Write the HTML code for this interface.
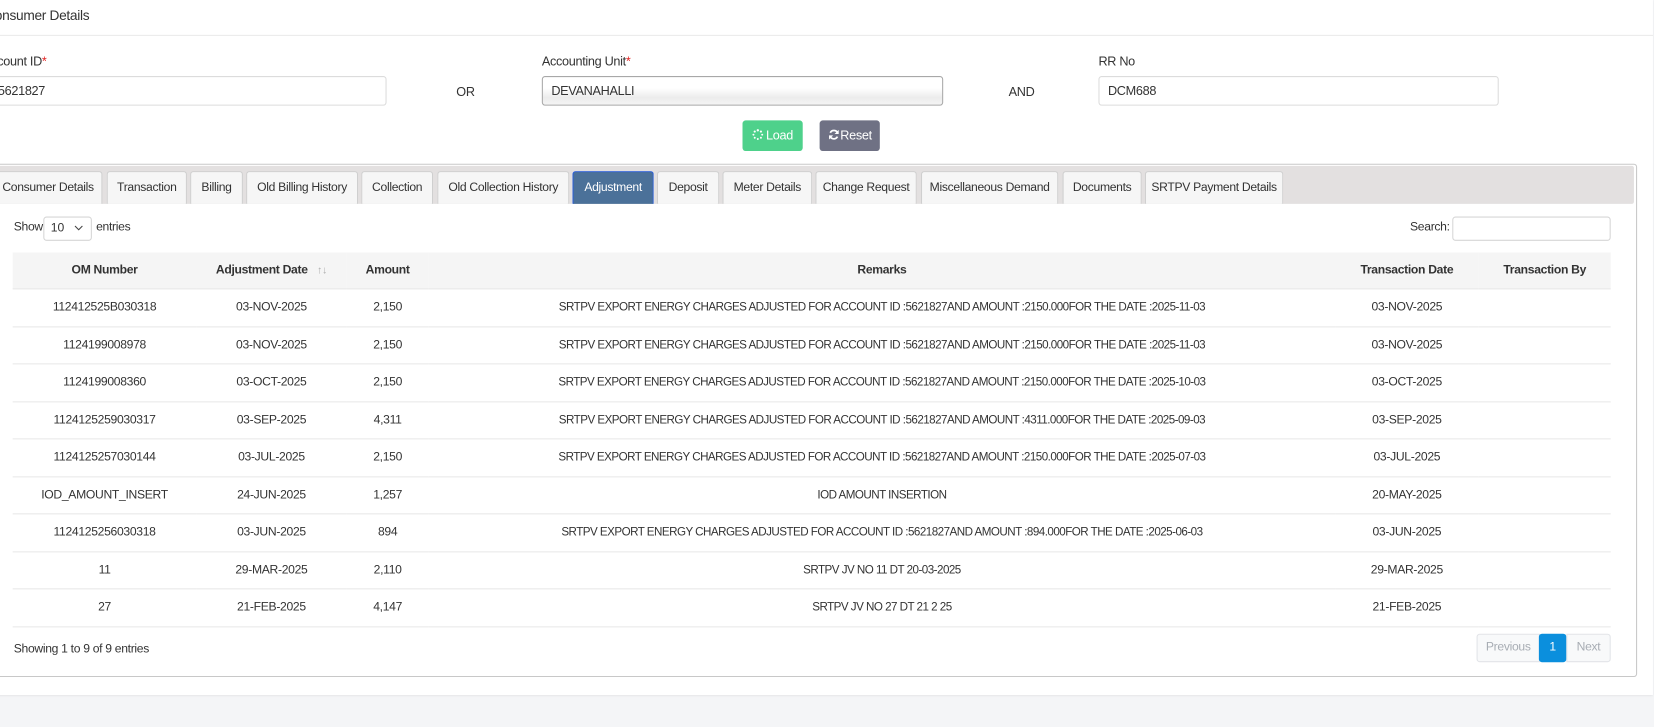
<!DOCTYPE html>
<html><head><meta charset="utf-8"><style>
html,body{margin:0;padding:0;width:1654px;height:726px;overflow:hidden;background:#f4f5f7;font-family:"Liberation Sans",sans-serif;color:#333}
#w{position:absolute;left:0;top:0;width:1566px;height:688px;transform:scale(1.0562);transform-origin:0 0}
.a{position:absolute;white-space:nowrap}
#card{position:absolute;left:-10px;top:0;width:1575px;height:658px;background:#fff;box-shadow:0 1px 2px rgba(0,0,0,.08)}
.f{font-size:12px;letter-spacing:-.3px}
.inp{position:absolute;height:28px;border:1px solid #dcdcdc;border-radius:3px;background:#fff;box-sizing:border-box;font-size:12px;letter-spacing:-.3px;line-height:27px;padding-left:8px}
.req{color:#e02020}
.btn{position:absolute;top:114px;height:29px;border-radius:3px;color:#fff;font-size:12px;letter-spacing:-.3px;line-height:29px;text-align:center}
#panel{position:absolute;left:-10px;top:155px;width:1560px;height:486px;border:1px solid #c8c8c8;border-radius:3px;box-sizing:border-box;background:#fff}
#bar{position:absolute;left:-10px;top:157px;width:1557px;height:36px;background:#e3e0e0;border-radius:2px}
.tab{position:absolute;top:162px;height:31px;box-sizing:border-box;border:1px solid #cfcfcf;border-bottom:none;background:#f6f6f6;border-radius:3px 3px 0 0;font-size:11.5px;letter-spacing:-.3px;line-height:31px;text-align:center;color:#333}
.tab.act{background:#4b7199;border:1px solid #2b5fd9;border-bottom:none;color:#fff}
table{position:absolute;left:12px;top:239px;width:1513px;border-collapse:collapse;table-layout:fixed;font-size:11.5px;letter-spacing:-.3px}
th{height:34px;background:#f5f5f5;font-weight:bold;text-align:center;border-bottom:1px solid #e8e8e8;padding:0}
td{height:34.5px;text-align:center;border-bottom:1px solid #e8e8e8;padding:0}
td:nth-child(4){font-size:11px;letter-spacing:-.5px}
.pg{position:absolute;top:600px;height:27px;box-sizing:border-box;font-size:11.5px;letter-spacing:-.3px;line-height:25px;text-align:center}
</style></head><body><div id="w">
<div id="card"></div>
<div class="a" style="left:-14px;top:7px;font-size:13px;letter-spacing:-.3px">Consumer Details</div>
<div class="a" style="left:0;top:33px;width:1565px;height:1px;background:#eaeaea"></div>

<div class="a f" style="left:-16px;top:51px">Account ID<span class="req">*</span></div>
<div class="a f" style="left:513px;top:51px">Accounting Unit<span class="req">*</span></div>
<div class="a f" style="left:1040px;top:51px">RR No</div>

<div class="inp" style="left:-20px;top:72px;width:386px;padding-left:17px">5621827</div>
<div class="a f" style="left:432px;top:80px">OR</div>
<div class="inp" style="left:513px;top:72px;width:380px;border-color:#a8a8a8;background:linear-gradient(#fff 0%,#fff 40%,#ececec 75%,#f4f4f4 100%)">DEVANAHALLI</div>
<div class="a f" style="left:955px;top:80px">AND</div>
<div class="inp" style="left:1040px;top:72px;width:379px">DCM688</div>

<div class="btn" style="left:703px;width:57px;background:#4ed18b">
<svg width="11" height="11" viewBox="0 0 12 12" style="vertical-align:-1px;margin-right:2px"><g fill="#fff"><circle cx="6" cy="1.5" r="1.2"/><circle cx="9.2" cy="2.8" r="1.1"/><circle cx="10.5" cy="6" r="1"/><circle cx="9.2" cy="9.2" r="1"/><circle cx="6" cy="10.5" r="1"/><circle cx="2.8" cy="9.2" r="1"/><circle cx="1.5" cy="6" r="1"/><circle cx="2.8" cy="2.8" r="1.1"/></g></svg>Load</div>
<div class="btn" style="left:776px;width:57px;background:#6f7184">
<svg width="11" height="11" viewBox="0 0 12 12" style="vertical-align:-1px;margin-right:1px"><path d="M10 4.5A4.2 4.2 0 0 0 2.3 4M2 7.5a4.2 4.2 0 0 0 7.7.5" stroke="#fff" stroke-width="1.8" fill="none"/><path d="M11 1v4.3H6.7zM1 11V6.7h4.3z" fill="#fff"/></svg>Reset</div>

<div id="panel"></div>
<div id="bar"></div>
<div class="tab" style="left:-6px;width:103px">Consumer Details</div>
<div class="tab" style="left:101px;width:76px">Transaction</div>
<div class="tab" style="left:180px;width:50px">Billing</div>
<div class="tab" style="left:233px;width:106px">Old Billing History</div>
<div class="tab" style="left:342px;width:68px">Collection</div>
<div class="tab" style="left:414px;width:125px">Old Collection History</div>
<div class="tab act" style="left:542px;width:77px">Adjustment</div>
<div class="tab" style="left:622px;width:59px">Deposit</div>
<div class="tab" style="left:684px;width:85px">Meter Details</div>
<div class="tab" style="left:772px;width:96px">Change Request</div>
<div class="tab" style="left:872px;width:130px">Miscellaneous Demand</div>
<div class="tab" style="left:1006px;width:75px">Documents</div>
<div class="tab" style="left:1084px;width:131px">SRTPV Payment Details</div>

<div class="a f" style="left:13px;top:209px;font-size:11.5px">Show</div>
<div class="a" style="left:41px;top:205px;width:46px;height:23px;border:1px solid #d6d6d6;border-radius:3px;box-sizing:border-box;font-size:11.5px;line-height:21px;padding-left:6px">10 <svg width="9" height="6" viewBox="0 0 9 6" style="margin-left:6px"><path d="M1 1l3.5 3.5L8 1" stroke="#444" fill="none"/></svg></div>
<div class="a f" style="left:91px;top:209px;font-size:11.5px">entries</div>
<div class="a f" style="left:1335px;top:209px;font-size:11.5px">Search:</div>
<div class="a" style="left:1375px;top:205px;width:150px;height:23px;border:1px solid #d6d6d6;border-radius:3px;box-sizing:border-box"></div>

<table>
<colgroup><col style="width:174px"><col style="width:142px"><col style="width:78px"><col style="width:858px"><col style="width:136px"><col style="width:125px"></colgroup>
<tr><th>OM Number</th><th>Adjustment Date <span style="color:#aaa;font-weight:normal;font-size:10px;margin-left:6px">↑↓</span></th><th>Amount</th><th>Remarks</th><th>Transaction Date</th><th>Transaction By</th></tr>
<tr><td>112412525B030318</td><td>03-NOV-2025</td><td>2,150</td><td>SRTPV EXPORT ENERGY CHARGES ADJUSTED FOR ACCOUNT ID :5621827AND AMOUNT :2150.000FOR THE DATE :2025-11-03</td><td>03-NOV-2025</td><td></td></tr>
<tr><td>1124199008978</td><td>03-NOV-2025</td><td>2,150</td><td>SRTPV EXPORT ENERGY CHARGES ADJUSTED FOR ACCOUNT ID :5621827AND AMOUNT :2150.000FOR THE DATE :2025-11-03</td><td>03-NOV-2025</td><td></td></tr>
<tr><td>1124199008360</td><td>03-OCT-2025</td><td>2,150</td><td>SRTPV EXPORT ENERGY CHARGES ADJUSTED FOR ACCOUNT ID :5621827AND AMOUNT :2150.000FOR THE DATE :2025-10-03</td><td>03-OCT-2025</td><td></td></tr>
<tr><td>1124125259030317</td><td>03-SEP-2025</td><td>4,311</td><td>SRTPV EXPORT ENERGY CHARGES ADJUSTED FOR ACCOUNT ID :5621827AND AMOUNT :4311.000FOR THE DATE :2025-09-03</td><td>03-SEP-2025</td><td></td></tr>
<tr><td>1124125257030144</td><td>03-JUL-2025</td><td>2,150</td><td>SRTPV EXPORT ENERGY CHARGES ADJUSTED FOR ACCOUNT ID :5621827AND AMOUNT :2150.000FOR THE DATE :2025-07-03</td><td>03-JUL-2025</td><td></td></tr>
<tr><td>IOD_AMOUNT_INSERT</td><td>24-JUN-2025</td><td>1,257</td><td>IOD AMOUNT INSERTION</td><td>20-MAY-2025</td><td></td></tr>
<tr><td>1124125256030318</td><td>03-JUN-2025</td><td>894</td><td>SRTPV EXPORT ENERGY CHARGES ADJUSTED FOR ACCOUNT ID :5621827AND AMOUNT :894.000FOR THE DATE :2025-06-03</td><td>03-JUN-2025</td><td></td></tr>
<tr><td>11</td><td>29-MAR-2025</td><td>2,110</td><td>SRTPV JV NO 11 DT 20-03-2025</td><td>29-MAR-2025</td><td></td></tr>
<tr><td>27</td><td>21-FEB-2025</td><td>4,147</td><td>SRTPV JV NO 27 DT 21 2 25</td><td>21-FEB-2025</td><td></td></tr>
</table>

<div class="a f" style="left:13px;top:609px;font-size:11.5px">Showing 1 to 9 of 9 entries</div>
<div class="pg" style="left:1398px;width:60px;border:1px solid #e2e4e8;border-radius:3px 0 0 3px;background:#f8f9fa;color:#a8adb4">Previous</div>
<div class="pg" style="left:1457px;width:26px;background:#0b8fdd;color:#fff;border-radius:3px;line-height:27px">1</div>
<div class="pg" style="left:1483px;width:42px;border:1px solid #e2e4e8;border-radius:0 3px 3px 0;background:#f8f9fa;color:#a8adb4">Next</div>
</div></body></html>
